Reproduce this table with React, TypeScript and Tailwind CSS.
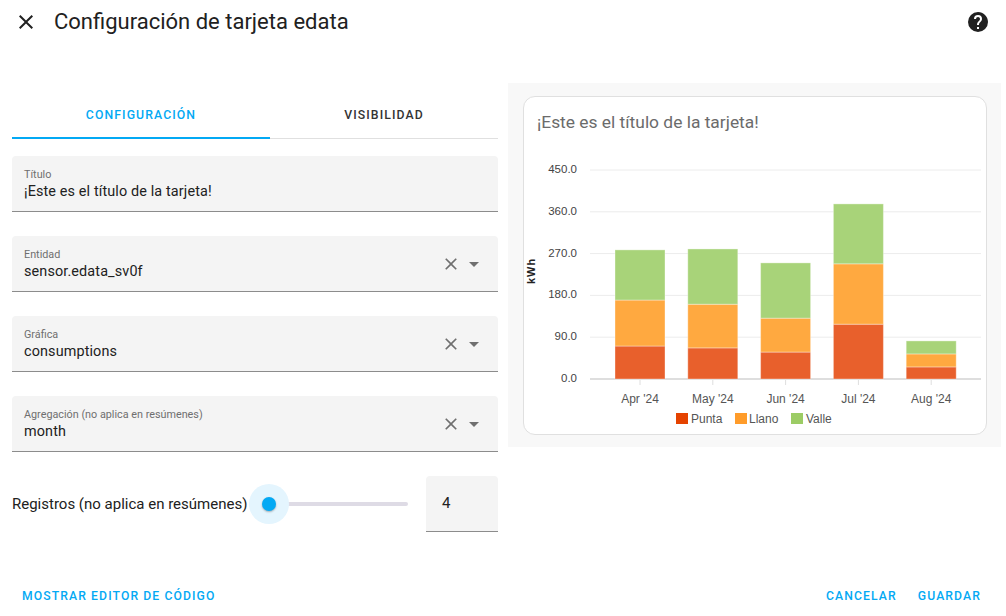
import React from 'react';

const BLUE = '#03a9f4';

const CLOSE = 'M19,6.41L17.59,5L12,10.59L6.41,5L5,6.41L10.59,12L5,17.59L6.41,19L12,13.41L17.59,19L19,17.59L13.41,12L19,6.41Z';
const HELP =
  'M15.07,11.25L14.17,12.17C13.45,12.89 13,13.5 13,15H11V14.5C11,13.39 11.45,12.39 12.17,11.67L13.41,10.41C13.78,10.05 14,9.55 14,9C14,7.89 13.1,7 12,7A2,2 0 0,0 10,9H8A4,4 0 0,1 12,5A4,4 0 0,1 16,9C16,9.88 15.64,10.67 15.07,11.25M13,19H11V17H13M12,2A10,10 0 0,0 2,12A10,10 0 0,0 12,22A10,10 0 0,0 22,12C22,6.47 17.5,2 12,2Z';
const MENU_DOWN = 'M7,10L12,15L17,10H7Z';

function Icon({ d, size = 24, className = '' }: { d: string; size?: number; className?: string }) {
  return (
    <svg width={size} height={size} viewBox="0 0 24 24" className={className}>
      <path d={d} fill="currentColor" />
    </svg>
  );
}

function Field({ label, value, select = false }: { label: string; value: string; select?: boolean }) {
  return (
    <div className="relative h-[56px] rounded-t-[4px] bg-[#f4f4f4] border-b border-[#8c8c8c] pl-3 pr-3 flex items-center">
      <div className="flex-1 pt-[2px]">
        <div className="text-[10.8px] leading-[16px] text-[#6f6f6f]">{label}</div>
        <div className="text-[14.4px] leading-[20px] tracking-[0.13px] text-[#212121] -mt-[1px]">{value}</div>
      </div>
      {select && (
        <div className="flex items-center text-[#6f6f6f]">
          <Icon d={CLOSE} size={20} />
          <Icon d={MENU_DOWN} size={24} className="ml-[1px]" />
        </div>
      )}
    </div>
  );
}

const SERIES = [
  { name: 'Punta', bar: '#e8602c', legend: '#e54300' },
  { name: 'Llano', bar: '#ffa940', legend: '#ff9c2a' },
  { name: 'Valle', bar: '#a8d379', legend: '#9ccc65' },
];

const DATA = [
  { label: "Apr '24", v: [71, 99, 108] },
  { label: "May '24", v: [67, 94, 119] },
  { label: "Jun '24", v: [58, 73, 119] },
  { label: "Jul '24", v: [118, 130, 129] },
  { label: "Aug '24", v: [26, 28, 28] },
];

function Chart() {
  const y0 = 228;
  const k = 209 / 450;
  const ticks = [450, 360, 270, 180, 90, 0];
  const font = '"Liberation Sans", Arial, sans-serif';
  return (
    <svg width={462} height={282} className="block">
      {ticks.map((t) => (
        <g key={t}>
          <line x1={66} x2={457} y1={y0 - t * k} y2={y0 - t * k} stroke={t === 0 ? '#dedede' : '#ececec'} strokeWidth={t === 0 ? 2 : 1} />
          <text x={53} y={y0 - t * k + 3} textAnchor="end" fontSize={11.5} fill="#444" fontFamily={font}>
            {t.toFixed(1)}
          </text>
        </g>
      ))}
      <text
        x={11}
        y={120}
        transform="rotate(-90 11 120)"
        textAnchor="middle"
        fontSize={11}
        fontWeight="bold"
        fill="#222"
        fontFamily={font}
        letterSpacing={1}
      >
        kWh
      </text>
      {DATA.map((d, i) => {
        const cx = 116 + i * 72.8;
        let acc = 0;
        return (
          <g key={d.label}>
            <line x1={cx} x2={cx} y1={y0} y2={y0 + 6} stroke="#dedede" />
            {d.v.map((v, j) => {
              const top = y0 - (acc + v) * k;
              const h = v * k;
              acc += v;
              return (
                <rect
                  key={j}
                  x={cx - 25}
                  y={top}
                  width={50}
                  height={h}
                  fill={SERIES[j].bar}
                  stroke="rgba(255,255,255,0.35)"
                  strokeWidth={1}
                />
              );
            })}
            <text x={cx} y={252} textAnchor="middle" fontSize={12} fill="#555" fontFamily={font}>
              {d.label}
            </text>
          </g>
        );
      })}
      {[
        { bx: 152, tx: 167 },
        { bx: 211, tx: 225 },
        { bx: 267, tx: 282 },
      ].map((p, i) => (
        <g key={i}>
          <rect x={p.bx} y={262} width={12} height={11} fill={SERIES[i].legend} />
          <text x={p.tx} y={272} fontSize={12} fill="#555" fontFamily={font}>
            {SERIES[i].name}
          </text>
        </g>
      ))}
    </svg>
  );
}

export default function App() {
  return (
    <div className="w-[1006px] h-[616px] bg-white flex flex-col overflow-hidden font-['Roboto',sans-serif] text-[#212121]">
      <div className="h-[44px] flex items-center pl-[14px] pr-[16px]">
        <Icon d={CLOSE} size={24} className="text-[#212121]" />
        <div className="ml-[16px] text-[22px] leading-[28px] text-[#212121]">Configuración de tarjeta edata</div>
        <div className="flex-1" />
        <Icon d={HELP} size={24} className="text-[#212121]" />
      </div>

      <div className="flex items-start mt-[39px]">
        <div className="w-[486px] ml-[12px] pt-[8px]">
          <div className="flex h-[48px] border-b border-[#e0e0e0] relative">
            <div className="w-[258px] flex items-center justify-center pt-[2px] text-[12.25px] font-medium tracking-[1.1px] text-[#03a9f4] relative">
              CONFIGURACIÓN
              <div className="absolute left-0 right-0 -bottom-[1px] h-[2px] bg-[#03a9f4]" />
            </div>
            <div className="flex-1 flex items-center justify-center pt-[2px] text-[12.25px] font-medium tracking-[1.1px] text-[#333]">
              VISIBILIDAD
            </div>
          </div>

          <div className="mt-[17px] flex flex-col gap-[24px]">
            <Field label="Título" value="¡Este es el título de la tarjeta!" />
            <Field label="Entidad" value="sensor.edata_sv0f" select />
            <Field label="Gráfica" value="consumptions" select />
            <Field label="Agregación (no aplica en resúmenes)" value="month" select />
            <div className="flex items-center h-[56px]">
              <div className="text-[15px] text-[#212121] whitespace-nowrap">Registros (no aplica en resúmenes)</div>
              <div className="relative flex-1 h-[56px] flex items-center ml-[15px] mr-[18px]">
                <div className="h-[4px] w-full rounded-full bg-[#dedbe5]" />
                <div className="absolute left-[-13px] top-[8px] w-[40px] h-[40px] rounded-full bg-[#e4f5fe]" />
                <div className="absolute left-0 top-[21px] w-[14px] h-[14px] rounded-full bg-[#03a9f4] shadow-[0_1px_2px_rgba(0,0,0,0.3)]" />
              </div>
              <div className="w-[72px] h-[56px] bg-[#f4f4f4] border-b border-[#8c8c8c] rounded-t-[4px] flex items-center pl-[16px] text-[15px]">
                4
              </div>
            </div>
          </div>
        </div>

        <div className="ml-[10px] w-[493px] h-[364px] bg-[#f8f8f8] pl-[15px] pr-[14px] pt-[13px]">
          <div className="h-[339px] bg-white border border-[#e0e0e0] rounded-[12px]">
            <div className="pl-[13px] pt-[15px] text-[17.4px] leading-[20px] text-[#6b6b6b]">¡Este es el título de la tarjeta!</div>
            <div className="mt-[19px]">
              <Chart />
            </div>
          </div>
        </div>
      </div>

      <div className="mt-auto h-[36px] mb-[2px] flex items-center pl-[22px] pr-[25px] text-[12.2px] font-medium tracking-[1.1px]" style={{ color: BLUE }}>
        <div>MOSTRAR EDITOR DE CÓDIGO</div>
        <div className="flex-1" />
        <div>CANCELAR</div>
        <div className="ml-[21px]">GUARDAR</div>
      </div>
    </div>
  );
}
